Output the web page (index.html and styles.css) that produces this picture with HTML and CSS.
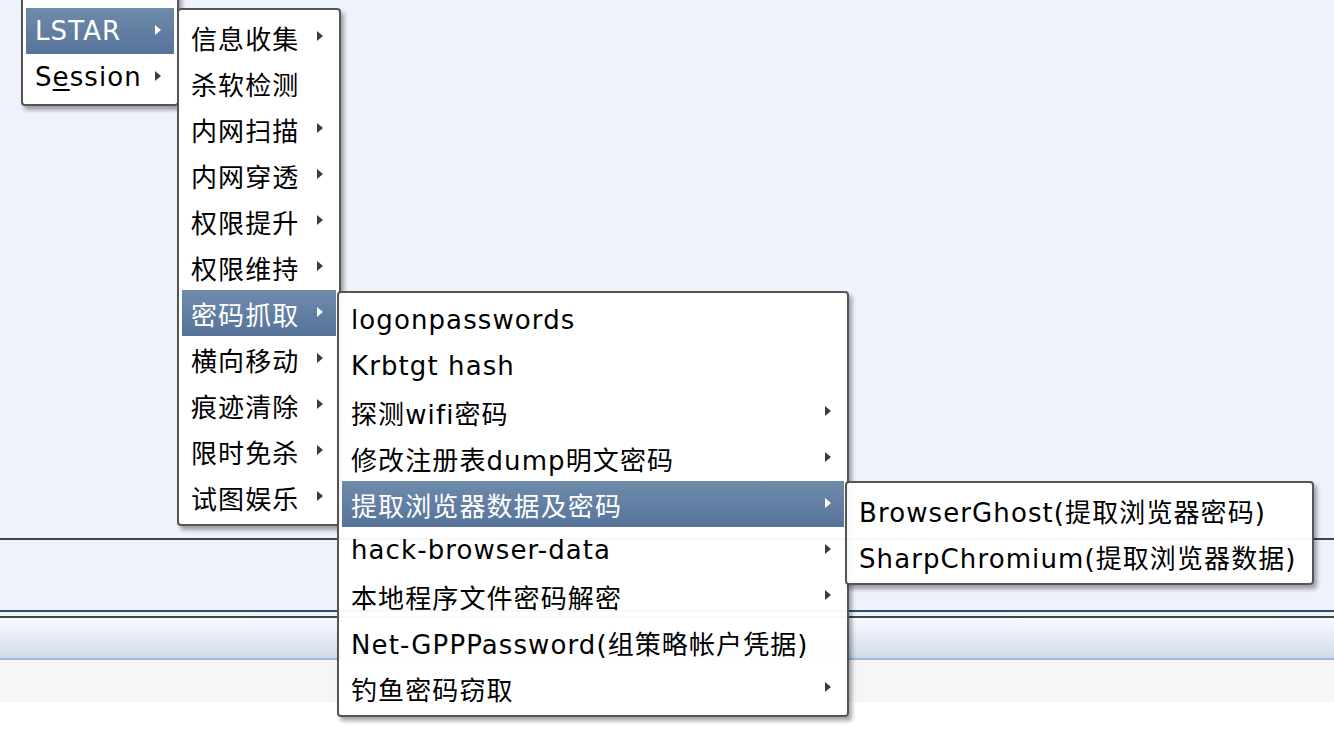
FILE: index.html
```html
<!DOCTYPE html>
<html lang="en">
<head>
  <meta charset="UTF-8">
  <meta name="viewport" content="width=device-width, initial-scale=1.0">
  <title>LSTAR menu</title>
  <link rel="stylesheet" href="styles.css">
</head>
<body>
  <div class="workspace">
    <div class="menu menu-root">
      <div class="item"></div>
      <div class="item sub active"><span class="label">LSTAR</span><span class="arrow"></span></div>
      <div class="item sub"><span class="label">S<u>e</u>ssion</span><span class="arrow"></span></div>
    </div>

    <div class="menu menu-lstar">
      <div class="item sub"><span class="label">信息收集</span><span class="arrow"></span></div>
      <div class="item"><span class="label">杀软检测</span></div>
      <div class="item sub"><span class="label">内网扫描</span><span class="arrow"></span></div>
      <div class="item sub"><span class="label">内网穿透</span><span class="arrow"></span></div>
      <div class="item sub"><span class="label">权限提升</span><span class="arrow"></span></div>
      <div class="item sub"><span class="label">权限维持</span><span class="arrow"></span></div>
      <div class="item sub active"><span class="label">密码抓取</span><span class="arrow"></span></div>
      <div class="item sub"><span class="label">横向移动</span><span class="arrow"></span></div>
      <div class="item sub"><span class="label">痕迹清除</span><span class="arrow"></span></div>
      <div class="item sub"><span class="label">限时免杀</span><span class="arrow"></span></div>
      <div class="item sub"><span class="label">试图娱乐</span><span class="arrow"></span></div>
    </div>

    <div class="menu menu-password">
      <div class="item"><span class="label">logonpasswords</span></div>
      <div class="item"><span class="label">Krbtgt hash</span></div>
      <div class="item sub"><span class="label">探测wifi密码</span><span class="arrow"></span></div>
      <div class="item sub"><span class="label">修改注册表dump明文密码</span><span class="arrow"></span></div>
      <div class="item sub active"><span class="label">提取浏览器数据及密码</span><span class="arrow"></span></div>
      <div class="item sub"><span class="label">hack-browser-data</span><span class="arrow"></span></div>
      <div class="item sub"><span class="label">本地程序文件密码解密</span><span class="arrow"></span></div>
      <div class="item"><span class="label">Net-GPPPassword(组策略帐户凭据)</span></div>
      <div class="item sub"><span class="label">钓鱼密码窃取</span><span class="arrow"></span></div>
    </div>

    <div class="menu menu-browser">
      <div class="item"><span class="label">BrowserGhost(提取浏览器密码)</span></div>
      <div class="item"><span class="label">SharpChromium(提取浏览器数据)</span></div>
    </div>
  </div>
  <div class="console"></div>
  <div class="console-gap"></div>
  <div class="tabbar"></div>
  <div class="statusbar"></div>
</body>
</html>
```

FILE: styles.css
```css
html,
body {
  margin: 0;
  padding: 0;
  min-height: 100vh;
}

body {
  background-color: #ffffff;
  font-family: "DejaVu Sans", "Noto Sans CJK SC", sans-serif;
}

.workspace {
  position: relative;
  height: 538px;
  background-color: #eef2fa;
  border-bottom: 2px solid #444444;
}

.console {
  height: 70px;
  background-color: #eef2fa;
  border-bottom: 2px solid #2f4f70;
}

.console-gap {
  height: 4px;
  background-color: #eef2fa;
}

.tabbar {
  height: 40px;
  border-top: 2px solid #444444;
  border-bottom: 2px solid #9ebad6;
  background: linear-gradient(to bottom, #f8faff, #cfdbe8);
}

.statusbar {
  height: 42px;
  background-color: #f6f6f8;
}

/* popup menus */
.menu {
  position: absolute;
  z-index: 2;
  box-sizing: border-box;
  padding: 4px 3px;
  background-color: rgba(255, 255, 255, 0.96);
  border: 2px solid #555555;
  border-radius: 4px;
  box-shadow: 3px 4px 4px rgba(0, 0, 0, 0.35);
}

.menu-root {
  left: 21px;
  top: -44px;
  width: 158px;
}

.menu-lstar {
  left: 177px;
  top: 8px;
  width: 164px;
}

.menu-password {
  left: 337px;
  top: 291px;
  width: 512px;
}

.menu-browser {
  left: 845px;
  top: 481px;
  width: 469px;
}

.item {
  display: flex;
  align-items: center;
  height: 46px;
  padding: 0 13px 0 9px;
  font-size: 26px;
  letter-spacing: 1.1px;
  color: #000000;
  white-space: nowrap;
}

.item .label {
  flex: 1;
}

.item u {
  text-underline-offset: 3px;
}

.arrow {
  width: 0;
  height: 0;
  margin-top: -3px;
  border-left: 6px solid #3c3c3c;
  border-top: 5px solid transparent;
  border-bottom: 5px solid transparent;
}

.item.active {
  background: linear-gradient(to bottom, #6f8bab, #56739a);
  color: #ffffff;
}

.item.active .arrow {
  border-left-color: #ffffff;
}
```
